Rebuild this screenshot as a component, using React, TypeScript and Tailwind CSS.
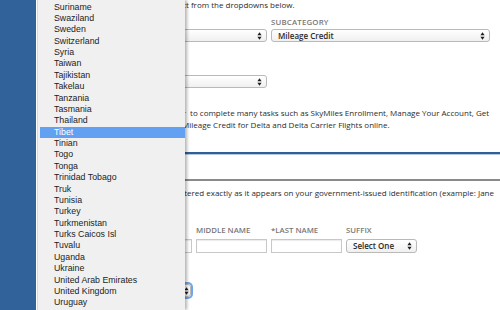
import React from "react";

const countries = [
  "Suriname", "Swaziland", "Sweden", "Switzerland", "Syria", "Taiwan", "Tajikistan",
  "Takelau", "Tanzania", "Tasmania", "Thailand", "Tibet", "Tinian", "Togo", "Tonga",
  "Trinidad Tobago", "Truk", "Tunisia", "Turkey", "Turkmenistan", "Turks Caicos Isl",
  "Tuvalu", "Uganda", "Ukraine", "United Arab Emirates", "United Kingdom", "Uruguay",
  "Uzbekistan",
];

function Arrows() {
  return (
    <svg width="5" height="8" viewBox="0 0 5 8" className="shrink-0">
      <path d="M2.5 0.3 L4.6 3.2 H0.4Z M2.5 7.7 L4.6 4.8 H0.4Z" fill="#1e1e1e" />
    </svg>
  );
}

function Select({ className, text }: { className: string; text?: string }) {
  return (
    <div
      className={
        "flex items-center justify-between rounded-[3px] border border-[#b9b9b9] bg-gradient-to-b from-white to-[#f0f0f0] pl-[6px] text-[8px] font-semibold text-[#2a2a2a] " +
        className
      }
    >
      <span className="whitespace-nowrap">{text}</span>
      <Arrows />
    </div>
  );
}

function Input({ className }: { className: string }) {
  return <div className={"border border-[#c8c8c8] bg-white shadow-[inset_0_1px_1px_rgba(0,0,0,0.08)] " + className} />;
}

export default function App() {
  return (
    <div className="relative flex h-[310px] w-[500px] overflow-hidden bg-white font-['Open_Sans',sans-serif] text-[8px] text-[#2b2b2b]">
      <div className="w-[36px] shrink-0 bg-[#31639a]" />
      <main className="flex-1 pl-[14px]">
        <div className="-mt-[1px] flex h-[12px] items-center whitespace-nowrap leading-[12px]">
          <span className="flex w-[136px] shrink-0 justify-end">Please choose a topic and subjec</span>
          <span>t from the dropdowns below.</span>
        </div>

        <div className="mt-[6px] grid grid-cols-[217px_219px] gap-x-[4px]">
          <div className="h-[10px] text-[7.8px] font-semibold leading-[10px] tracking-[0.2px] text-[#777]">*CATEGORY</div>
          <div className="h-[10px] text-[7.8px] font-semibold leading-[10px] tracking-[0.2px] text-[#777]">SUBCATEGORY</div>
          <Select className="mt-[2px] h-[13px] pr-[4px]" text="SkyMiles" />
          <Select className="mt-[2px] h-[13px] pr-[4px]" text="Mileage Credit" />
        </div>

        <div className="mt-[21px] h-[10px] text-[7.8px] font-semibold leading-[10px] text-[#777]">*TOPIC</div>
        <Select className="mt-[2px] h-[13px] w-[217px] pr-[4px]" text="Select One" />

        <div className="mt-[19px] whitespace-nowrap leading-[12px]">
          <div className="flex">
            <span className="flex w-[136px] shrink-0 justify-end">
              Use&nbsp;<span className="text-[#2e6fbf]">Delta Help Center</span>
            </span>
            <span className="ml-[2px]">&nbsp;to complete many tasks such as SkyMiles Enrollment, Manage Your Account, Get</span>
          </div>
          <div className="flex">
            <span className="flex w-[132px] shrink-0 justify-end pr-[2px]">Request</span>
            <span>Mileage Credit for Delta and Delta Carrier Flights online.</span>
          </div>
        </div>

        <div className="mt-[21px] h-[3px] border-b border-[#b7c9df] bg-[#2f5f96]" />
        <div className="h-[24px] pt-[6px] text-[9px] font-semibold text-[#2f5f96]">PASSENGER INFORMATION</div>
        <div className="h-[2px] bg-[#8a8a8a]" />

        <div className="mt-[6px] whitespace-nowrap leading-[12px]">
          <div className="flex">
            <span className="flex w-[137px] shrink-0 justify-end">Your name must be ent</span>
            <span>ered exactly as it appears on your government-issued identification (example: Jane</span>
          </div>
          <div>Doe).</div>
        </div>

        <div className="mt-[14px] flex gap-x-[4px] text-[7.8px] font-semibold leading-[10px] text-[#777]">
          <div className="flex w-[67px] flex-col">
            <span>PREFIX</span>
            <Select className="mt-[4px] h-[14px] pr-[4px]" text="" />
          </div>
          <div className="flex w-[71px] flex-col">
            <span>*FIRST NAME</span>
            <Input className="mt-[4px] h-[14px]" />
          </div>
          <div className="flex w-[71px] flex-col">
            <span>MIDDLE NAME</span>
            <Input className="mt-[4px] h-[14px]" />
          </div>
          <div className="flex w-[71px] flex-col">
            <span>*LAST NAME</span>
            <Input className="mt-[4px] h-[14px]" />
          </div>
          <div className="flex w-[71px] flex-col">
            <span>SUFFIX</span>
            <Select className="mt-[4px] h-[14px] pr-[4px] text-[8.5px]" text="Select One" />
          </div>
        </div>

        <div className="mt-[17px] h-[10px] text-[7.8px] font-semibold leading-[10px] text-[#777]">*COUNTRY OF RESIDENCE</div>
        <Select className="mt-[4px] h-[13px] w-[141px] pr-[1px] ring-2 ring-[#6ea6ec]" text="United States" />
      </main>

      <div className="absolute bottom-0 left-[37px] top-0 w-[148px] border-l border-[#d9d9d9] bg-[#f0f0f0] pl-[2px] pt-[1.5px] font-['Liberation_Sans',sans-serif] text-[8.8px] text-[#1c1c1c] shadow-[2px_0_3px_rgba(0,0,0,0.3)]">
        {countries.map((c) => (
          <div
            key={c}
            className={
              c === "Tibet"
                ? "h-[11.375px] bg-[#62a0f2] pl-[14px] leading-[11.375px] text-white"
                : "h-[11.375px] pl-[14px] leading-[11.375px]"
            }
          >
            {c}
          </div>
        ))}
      </div>
    </div>
  );
}
